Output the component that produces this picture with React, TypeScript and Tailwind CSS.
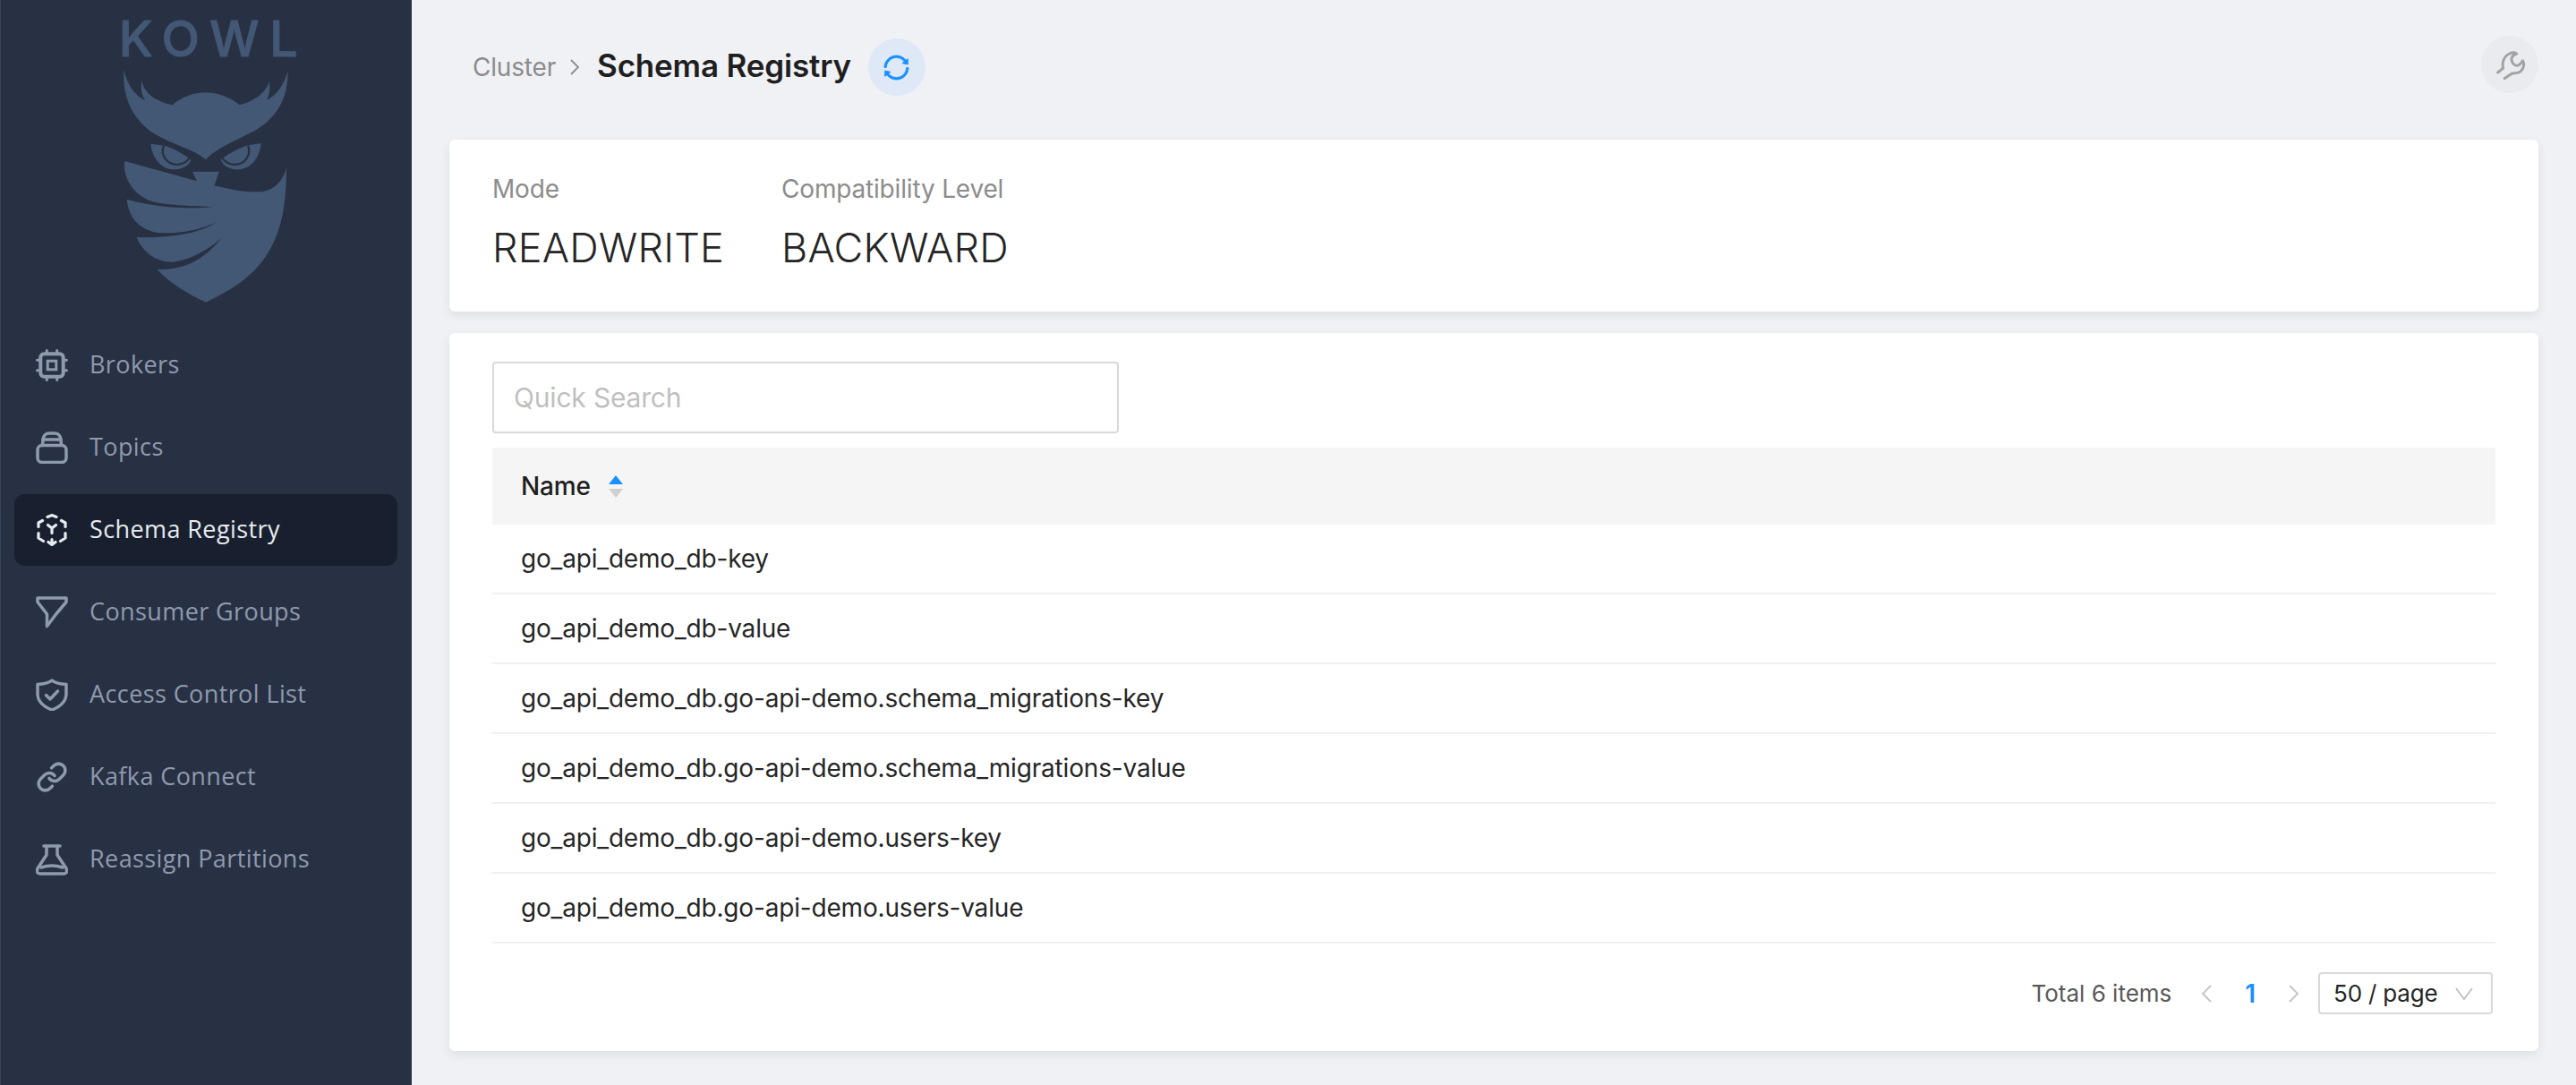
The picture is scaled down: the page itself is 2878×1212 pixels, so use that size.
import React from "react";
import { AiOutlineSync } from "react-icons/ai";

const dark = "#283143";
const owl = "#435875";

function Logo() {
  return (
    <svg viewBox="3 0 1380 1080" className="block w-[460px] h-[360px] shrink-0">
      <text x="398" y="189" fontFamily="Inter, sans-serif" fontWeight="500" fontSize="166" letterSpacing="35" fill={owl} stroke={owl} strokeWidth="3" strokeLinejoin="round">KOWL</text>
      <path fill={owl} d="M415 235C410 320 440 400 520 450C580 485 650 500 690 535C720 500 790 470 850 440C930 395 965 330 965 237C950 290 925 320 895 335C905 310 905 290 903 272C890 310 860 335 803 352C770 325 730 310 690 310C650 310 610 325 577 352C530 340 485 320 475 270C470 295 475 320 487 337C450 320 425 280 415 235Z" />
      <path fill={owl} d="M505 482L555 489C585 500 615 515 640 535C635 555 610 568 585 568C540 568 510 530 505 482Z" />
      <path fill="none" stroke={dark} strokeWidth="7" d="M549 488C535 525 565 555 600 551C615 549 627 541 635 530" />
      <path fill={owl} d="M875 480L825 488C795 500 765 515 740 535C745 555 770 568 795 568C840 568 870 530 875 480Z" />
      <path fill="none" stroke={dark} strokeWidth="7" d="M831 487C845 525 815 555 780 551C765 549 753 541 745 530" />
      <path fill={owl} d="M960 560C950 610 910 645 860 643C810 645 760 630 718 622L735 575L645 575L660 607L418 540C412 590 440 650 510 675C570 690 650 690 718 693C650 700 540 700 425 668C430 720 460 770 530 780C600 785 670 770 727 745C680 775 590 800 458 795C480 850 530 880 580 878C640 870 700 835 743 797C700 850 640 905 527 903C570 950 630 985 690 1013C760 980 840 935 890 860C945 780 960 680 960 560Z" />
    </svg>
  );
}

const iconProps = {
  viewBox: "0 0 36 36",
  fill: "none",
  stroke: "currentColor",
  strokeWidth: 3.5,
  strokeLinecap: "round" as const,
  strokeLinejoin: "round" as const,
  className: "w-9 h-9 shrink-0",
};

function Chip() {
  return (
    <svg {...iconProps}>
      <rect x="5.3" y="5.3" width="25.4" height="25.4" rx="4" strokeWidth="4" />
      <rect x="13.2" y="13.2" width="9.6" height="9.6" strokeWidth="3" strokeLinejoin="miter" />
      <path strokeWidth="3" d="M12.3 1.5v3M23.7 1.5v3M12.3 31.5v3M23.7 31.5v3M1.5 12.3h3M1.5 23.7h3M31.5 12.3h3M31.5 23.7h3" />
    </svg>
  );
}
function Stack() {
  return (
    <svg {...iconProps}>
      <rect x="2" y="15.5" width="32" height="19" rx="5" />
      <path d="M7.5 15L8 9Q9 2 15 2H21Q27 2 28 9L28.5 15" />
      <path d="M8 9H28" />
    </svg>
  );
}
function SchemaIcon() {
  return (
    <svg {...iconProps} strokeWidth={3.2}>
      <path d="M13 3.4L18 1.5 23 3.4M7.5 7.5L3 10V14.5M28.5 7.5L33 10V14.5M3 21.5V27L8.5 30.5M33 21.5V27L27.5 30.5" />
      <path d="M14 31.5L18 34.5 22 31.5M18 28.5V34.5" />
      <path d="M13.5 12.5L18 16 22.5 12.5M18 16V21.5" />
    </svg>
  );
}
function Funnel() {
  return (
    <svg {...iconProps}>
      <path d="M2 2H34V6.5L23 19.5 12.5 33.5V20L2 6.5Z" />
    </svg>
  );
}
function Shield() {
  return (
    <svg {...iconProps}>
      <path d="M18 2C21 4.5 27 6 34 6.5V17C34 26 26 32 18 35C10 32 2 26 2 17V6.5C9 6 15 4.5 18 2Z" />
      <path d="M11.5 18.5L16 23 24.5 14" />
    </svg>
  );
}
function LinkIcon() {
  return (
    <svg {...iconProps}>
      <g transform="scale(1.5)" strokeWidth="2.4">
        <path d="M10 13a5 5 0 0 0 7.54.54l3-3a5 5 0 0 0-7.07-7.07l-1.72 1.71" />
        <path d="M14 11a5 5 0 0 0-7.54-.54l-3 3a5 5 0 0 0 7.07 7.07l1.71-1.71" />
      </g>
    </svg>
  );
}
function Flask() {
  return (
    <svg {...iconProps}>
      <path d="M9 3H27M12 3V13L2 28Q0 34 5 34H31Q36 34 34 28L24 13V3" />
      <path d="M6 27Q18 23 30 27" />
    </svg>
  );
}
function Wrench() {
  return (
    <svg viewBox="0 -1.3 36 36" fill="none" stroke="#a3a3a3" strokeWidth="3" strokeLinecap="round" strokeLinejoin="round" className="w-9 h-9">
      <path d="M4.7 25.7L10.7 20.7C9 15 11 7 19 4C21.5 3.2 24 3.5 25.7 4.7C22 6 20 8 20 11C20 15 23 18 26 18C29 18 31 15 32.5 12.5C34.5 16 34 21 30 24.5C27 27 23 26 20.7 26.7L12.3 32.3" />
    </svg>
  );
}

const nav = [
  ["Brokers", Chip],
  ["Topics", Stack],
  ["Schema Registry", SchemaIcon],
  ["Consumer Groups", Funnel],
  ["Access Control List", Shield],
  ["Kafka Connect", LinkIcon],
  ["Reassign Partitions", Flask],
] as const;

const rows = [
  "go_api_demo_db-key",
  "go_api_demo_db-value",
  "go_api_demo_db.go-api-demo.schema_migrations-key",
  "go_api_demo_db.go-api-demo.schema_migrations-value",
  "go_api_demo_db.go-api-demo.users-key",
  "go_api_demo_db.go-api-demo.users-value",
];

function Chevron({ d, color, className }: { d: string; color: string; className: string }) {
  return (
    <svg viewBox="0 0 20 20" fill="none" stroke={color} strokeWidth="1.8" className={className}>
      <path d={d} />
    </svg>
  );
}

export default function App() {
  return (
    <div className="flex h-screen w-full overflow-hidden bg-[#f0f1f5] font-['Inter',sans-serif] text-[28px] tracking-[-0.18px] text-[#262626]">
      <aside className="w-[460px] shrink-0 bg-[#283143] border-l border-[#3a4354] flex flex-col">
        <Logo />
        <nav className="flex flex-col gap-3 pl-[15px] pr-4 pt-2">
          {nav.map(([label, Icon]) => {
            const active = label === "Schema Registry";
            return (
              <div
                key={label}
                className={
                  active
                    ? "h-20 flex items-center gap-6 pl-6 rounded-xl bg-[#181f2e] text-[#e8ebf0]"
                    : "h-20 flex items-center gap-6 pl-6 rounded-xl text-[#8f9aae]"
                }
              >
                <Icon />
                <span className="font-['Open_Sans',sans-serif] text-[27px] tracking-[0.4px] -mt-[2px]">{label}</span>
              </div>
            );
          })}
        </nav>
      </aside>

      <main className="flex-1 min-w-0 pl-[42px] pr-[42px] flex flex-col">
        <header className="h-[156px] shrink-0 flex items-start justify-between">
          <div className="flex items-center pl-[26px] pt-[43px]">
            <span className="text-[#8c8c8c]">Cluster</span>
            <Chevron d="M6 2l8 8-8 8" color="#8c8c8c" className="w-5 h-5 ml-[11px] mr-[15px]" />
            <h1 className="text-[35px] font-semibold text-[#1f1f1f] leading-none -mt-1">Schema Registry</h1>
            <div className="ml-[19px] w-16 h-16 rounded-full bg-[#dfe8f7] flex items-center justify-center text-[#1890ff]">
              <AiOutlineSync size={33} stroke="currentColor" strokeWidth={24} />
            </div>
          </div>
          <div className="mt-10 w-16 h-16 rounded-full bg-[#e9ebef] flex items-center justify-center">
            <Wrench />
          </div>
        </header>

        <section className="h-[192px] shrink-0 bg-white rounded-md shadow-[0_4px_12px_rgba(0,0,0,0.08)] px-12 pt-10 flex gap-16">
          <div>
            <div className="text-[#8c8c8c] leading-[30px]">Mode</div>
            <div className="text-[45px] font-light tracking-[0.2px] leading-[56px] mt-[23px] text-[#262626]">READWRITE</div>
          </div>
          <div>
            <div className="text-[#8c8c8c] leading-[30px]">Compatibility Level</div>
            <div className="text-[45px] font-light tracking-[0.2px] leading-[56px] mt-[23px] text-[#262626]">BACKWARD</div>
          </div>
        </section>

        <section className="mt-6 h-[802px] shrink-0 bg-white rounded-md shadow-[0_4px_12px_rgba(0,0,0,0.08)] px-12 pt-8 flex flex-col">
          <div className="w-[700px] h-20 border-2 border-[#d9d9d9] rounded flex items-center px-[22px] text-[30px] text-[#bfbfbf]">
            Quick Search
          </div>
          <div className="mt-4 h-[86px] bg-[#f5f5f5] flex items-center px-8 font-medium text-[#1f1f1f]">
            <span>Name</span>
            <span className="ml-5 flex flex-col gap-[5px]">
              <span className="w-0 h-0 border-x-[8px] border-x-transparent border-b-[10px] border-b-[#1890ff]" />
              <span className="w-0 h-0 border-x-[8px] border-x-transparent border-t-[10px] border-t-[#d0d0d0]" />
            </span>
          </div>
          {rows.map((r) => (
            <div key={r} className="h-[78px] flex items-center px-8 border-b-2 border-[#f0f0f0]">
              {r}
            </div>
          ))}
          <div className="mt-8 flex items-center justify-end pr-[3px] text-[26px]">
            <span className="text-[#595959] mr-[30px] tracking-normal">Total 6 items</span>
            <Chevron d="M14 1l-9 9 9 9" color="#c4c4c4" className="w-5 h-5" />
            <span className="mx-[32px] text-[#1890ff] font-semibold text-[28px]">1</span>
            <Chevron d="M6 1l9 9-9 9" color="#c4c4c4" className="w-5 h-5" />
            <div className="ml-[18px] w-[195px] h-[47px] border-2 border-[#d9d9d9] rounded flex items-center justify-between pl-[15px] pr-[20px]">
              <span>50 / page</span>
              <Chevron d="M1 4l9 12 9-12" color="#bfbfbf" className="w-5 h-5" />
            </div>
          </div>
        </section>
      </main>
    </div>
  );
}
